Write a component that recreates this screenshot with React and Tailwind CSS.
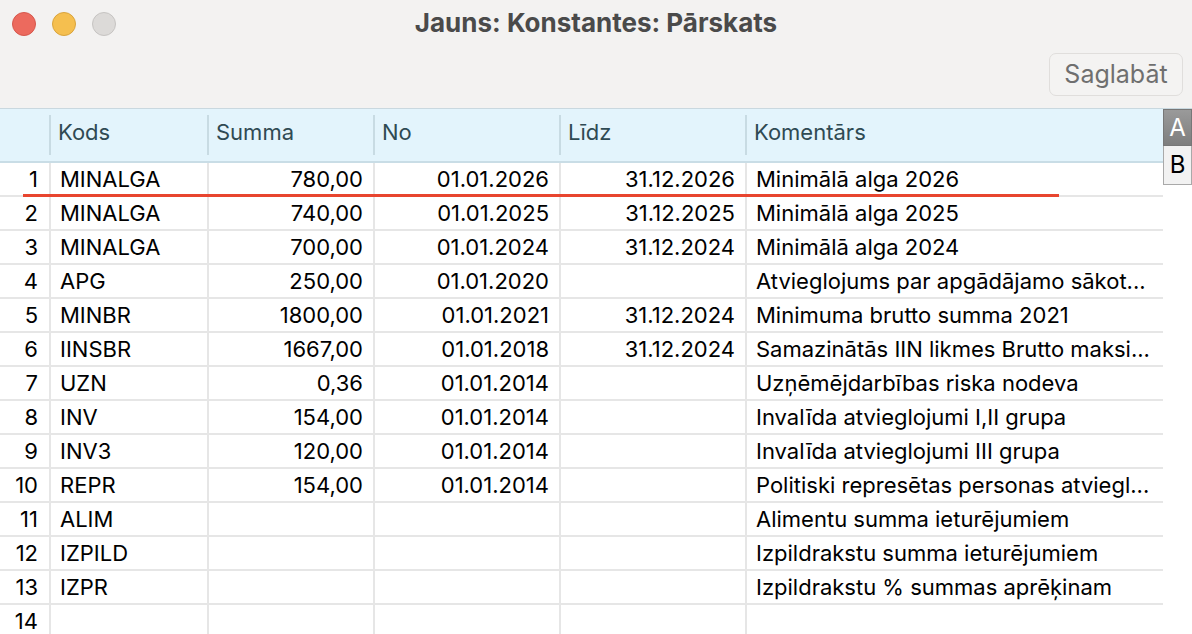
import React from "react";

const rows = [
  ["MINALGA", "780,00", "01.01.2026", "31.12.2026", "Minimālā alga 2026"],
  ["MINALGA", "740,00", "01.01.2025", "31.12.2025", "Minimālā alga 2025"],
  ["MINALGA", "700,00", "01.01.2024", "31.12.2024", "Minimālā alga 2024"],
  ["APG", "250,00", "01.01.2020", "", "Atvieglojums par apgādājamo sākot..."],
  ["MINBR", "1800,00", "01.01.2021", "31.12.2024", "Minimuma brutto summa 2021"],
  ["IINSBR", "1667,00", "01.01.2018", "31.12.2024", "Samazinātās IIN likmes Brutto maksi..."],
  ["UZN", "0,36", "01.01.2014", "", "Uzņēmējdarbības riska nodeva"],
  ["INV", "154,00", "01.01.2014", "", "Invalīda atvieglojumi I,II grupa"],
  ["INV3", "120,00", "01.01.2014", "", "Invalīda atvieglojumi III grupa"],
  ["REPR", "154,00", "01.01.2014", "", "Politiski represētas personas atviegl..."],
  ["ALIM", "", "", "", "Alimentu summa ieturējumiem"],
  ["IZPILD", "", "", "", "Izpildrakstu summa ieturējumiem"],
  ["IZPR", "", "", "", "Izpildrakstu % summas aprēķinam"],
  ["", "", "", "", ""],
];

const cols = "grid grid-cols-[49px_158px_166px_186px_186px_418px]";

function HeaderCell({ children, first }) {
  return (
    <div className="flex items-center h-full py-[6px]">
      <div
        className={
          "h-full w-full flex items-center pl-[7px] pb-[5px] " +
          (first ? "" : "border-l-2 border-[#c8dbe3]")
        }
      >
        {children}
      </div>
    </div>
  );
}

export default function App() {
  return (
    <div
      className="w-[1192px] h-[634px] overflow-hidden bg-white flex flex-col"
      style={{ fontFamily: "Inter, 'Liberation Sans', sans-serif" }}
    >
      {/* title bar */}
      <div className="shrink-0 h-[109px] bg-[#f3f2f1] flex flex-col border-b border-[#c9d8df]">
        <div className="relative h-[46px] flex items-center justify-center">
          <div className="absolute left-[12px] top-[12px] flex gap-[16px]">
            <div className="w-[24px] h-[24px] rounded-full bg-[#ec6a5e] border border-[#d6584d]" />
            <div className="w-[24px] h-[24px] rounded-full bg-[#f5bf4f] border border-[#d9a43d]" />
            <div className="w-[24px] h-[24px] rounded-full bg-[#dcdad8] border border-[#c6c4c2]" />
          </div>
          <div className="text-[26px] font-bold text-[#4a4a4a] leading-none">
            Jauns: Konstantes: Pārskats
          </div>
        </div>
        <div className="flex justify-end pr-[9px] pt-[7px]">
          <div className="w-[134px] h-[43px] rounded-[7px] border border-[#e0dedc] bg-[#f4f3f2] flex items-center justify-center text-[25px] text-[#6f6f6f]">
            Saglabāt
          </div>
        </div>
      </div>

      <div className="flex flex-1 min-h-0">
        {/* table */}
        <div className="w-[1163px] flex flex-col text-[22px]">
          <div className={cols + " shrink-0 h-[54px] bg-[#e3f4fc] border-b-2 border-[#c9dde6] text-[#2f4a53]"}>
            <HeaderCell first />
            <HeaderCell>Kods</HeaderCell>
            <HeaderCell>Summa</HeaderCell>
            <HeaderCell>No</HeaderCell>
            <HeaderCell>Līdz</HeaderCell>
            <HeaderCell>Komentārs</HeaderCell>
          </div>
          {rows.map((r, i) => (
            <div
              key={i}
              className={cols + " shrink-0 relative h-[34px] border-b-2 border-[#e6e6e6] text-black"}
            >
              <div className="flex items-center justify-end pr-[11px]">{i + 1}</div>
              <div className="flex items-center pl-[9px] border-l-2 border-[#e6e6e6]">{r[0]}</div>
              <div className="flex items-center justify-end pr-[10px] border-l-2 border-[#e6e6e6]">{r[1]}</div>
              <div className="flex items-center justify-end pr-[10px] border-l-2 border-[#e6e6e6]">{r[2]}</div>
              <div className="flex items-center justify-end pr-[10px] border-l-2 border-[#e6e6e6]">{r[3]}</div>
              <div className="flex items-center pl-[9px] border-l-2 border-[#e6e6e6] whitespace-nowrap overflow-hidden">
                {r[4]}
              </div>
              {i === 0 && (
                <div className="absolute left-[23px] w-[1036px] bottom-[-2px] h-[3px] bg-[#e8452f]" />
              )}
            </div>
          ))}
        </div>

        {/* side tabs */}
        <div className="w-[29px] flex flex-col">
          <div className="h-[37px] bg-gradient-to-b from-[#9a9a9a] to-[#7e7e7e] border border-[#777] flex items-center justify-center text-white text-[24px]">
            A
          </div>
          <div className="h-[39px] bg-[#f2f2f2] border border-t-0 border-[#a9a9a9] flex items-center justify-center text-black text-[24px]">
            B
          </div>
        </div>
      </div>
    </div>
  );
}
